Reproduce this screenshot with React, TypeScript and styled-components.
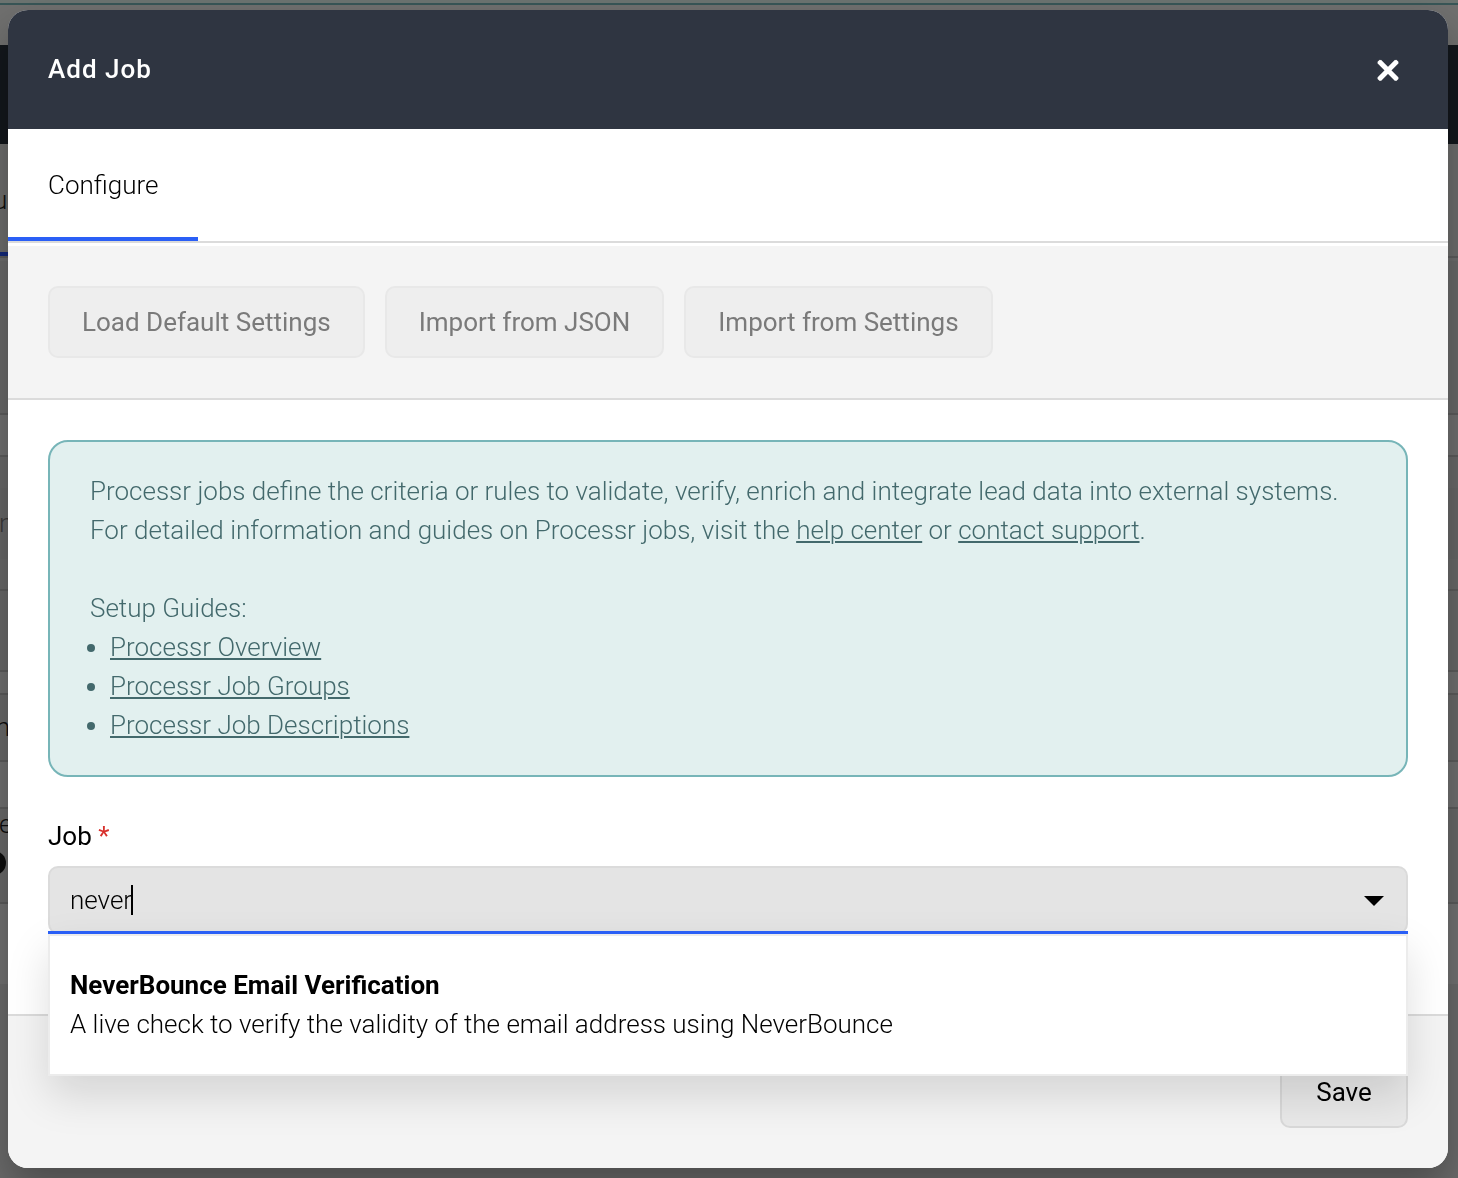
import React, { useState } from "react";
import styled, { createGlobalStyle } from "styled-components";

const GlobalStyle = createGlobalStyle`
  *, *::before, *::after { box-sizing: border-box; }
  body {
    margin: 0;
    background: #6a6a6a;
    color: #000;
    font: 300 26px/39px Roboto, "Liberation Sans", sans-serif;
    overflow: hidden;
  }
  button, input { font: inherit; color: inherit; }
`;

const Page = styled.div`
  display: flex;
  flex-direction: column;
`;

const Band = styled.div<{ $h: number; $bg?: string; $line?: string; $ink?: string }>`
  display: flex;
  align-items: center;
  height: ${(p) => p.$h}px;
  background: ${(p) => p.$bg ?? "#696969"};
  border-bottom: ${(p) => (p.$line ? `2px solid ${p.$line}` : "0")};
  color: ${(p) => p.$ink ?? "#0c0c0c"};
  overflow: hidden;
`;

const Clipped = styled.span<{ $cut: number }>`
  margin-left: -${(p) => p.$cut}px;
`;

const PageTab = styled.span`
  display: flex;
  align-items: center;
  align-self: stretch;
  width: 100px;
  padding-top: 4px;
  border-bottom: 4px solid #14297a;
`;

const Dot = styled.span`
  width: 24px;
  height: 24px;
  margin-left: -18px;
  border-radius: 50%;
  background: #0c0c0c;
`;

const Overlay = styled.div`
  position: fixed;
  inset: 0;
  padding: 10px 10px 10px 8px;
`;

const Modal = styled.section`
  border-radius: 20px;
  background: #fff;
  box-shadow: 0 20px 40px rgba(0, 0, 0, 0.3);
`;

const Header = styled.header`
  display: flex;
  align-items: center;
  justify-content: space-between;
  padding: 40px;
  border-radius: 20px 20px 0 0;
  background: #2f3541;
  color: #fff;
`;

const Title = styled.h2`
  margin: 0;
  font-size: 26px;
  font-weight: 500;
  letter-spacing: 1px;
`;

const Close = styled.button`
  display: flex;
  padding: 0;
  border: 0;
  background: none;
`;

const Tabs = styled.nav`
  display: flex;
  margin-bottom: 3px;
  border-bottom: 2px solid #dbdbdb;
`;

const Tab = styled.button`
  height: 112px;
  padding: 4px 40px 0;
  border: 0;
  border-bottom: 4px solid #2a5ff6;
  background: none;
`;

const Toolbar = styled.div`
  display: flex;
  gap: 20px;
  padding: 40px;
  border-bottom: 2px solid #dbdbdb;
  background: #f4f4f4;
`;

const Button = styled.button`
  min-width: 128px;
  height: 72px;
  padding: 0 32px;
  border: 2px solid #d9d9d9;
  border-radius: 10px;
  background: #e9e9e9;
  font-weight: 400;

  &:disabled {
    border-color: #e8e8e8;
    background: #eee;
    color: #7a7a7a;
  }
`;

const Body = styled.div`
  padding: 40px 40px 80px;
`;

const Notice = styled.div`
  padding: 30px 40px;
  border: 2px solid #77b5b8;
  border-radius: 20px;
  background: #e2f0ef;
  color: #43696c;

  p { margin: 0 0 39px; }
  p + p { margin: 0; }
  ul { margin: 0; padding-left: 20px; }
  a { color: inherit; text-underline-offset: 2px; text-decoration-thickness: 2px; }
`;

const Label = styled.label`
  display: block;
  margin: 40px 0 10px;
  font-weight: 400;

  span { color: #d8302c; }
`;

const Combo = styled.div`
  position: relative;
`;

const Field = styled.div`
  display: flex;
  align-items: center;
  height: 68px;
  padding: 0 20px;
  border: 2px solid #dbdbdb;
  border-radius: 10px;
  background: #e4e4e4;
`;

const FieldInput = styled.input`
  field-sizing: content;
  min-width: 0;
  padding: 0;
  border: 0;
  outline: 0;
  background: none;
  caret-color: transparent;
`;

const Caret = styled.span`
  width: 2px;
  height: 30px;
  margin-left: -1px;
  background: #000;
`;

const Toggle = styled.button`
  display: flex;
  margin-left: auto;
  padding: 2px 2px 0;
  border: 0;
  background: none;
`;

const Menu = styled.ul`
  position: absolute;
  top: 65px;
  left: 0;
  right: 0;
  margin: 0;
  padding: 0;
  border-top: 3px solid #2a5ff6;
  background: #fff;
  box-shadow: 0 20px 40px rgba(0, 0, 0, 0.13);
  list-style: none;
`;

const Option = styled.li`
  padding: 30px 20px;
  border: 2px solid #ececec;

  strong { display: block; font-weight: 700; }
`;

const Footer = styled.footer`
  display: flex;
  justify-content: flex-end;
  padding: 40px;
  border-top: 2px solid #dbdbdb;
  border-radius: 0 0 20px 20px;
  background: #f4f4f4;
`;

const guides = ["Processr Overview", "Processr Job Groups", "Processr Job Descriptions"];
const imports = ["Load Default Settings", "Import from JSON", "Import from Settings"];
const rule = "#5c5c5c";

function Backdrop() {
  return (
    <Page aria-hidden="true">
      <Band $h={5} $bg="#6c7471" $line="#385657" />
      <Band $h={40} $bg="#70706f" />
      <Band $h={99} $bg="#13171c" />
      <Band $h={114} $bg="#6d6d6c" $line={rule}>
        <PageTab><Clipped $cut={7}>u</Clipped></PageTab>
      </Band>
      <Band $h={3} $bg="#6d6d6d" />
      <Band $h={154} $bg="#696969" $line={rule} />
      <Band $h={42} $bg="#707070" $line={rule} />
      <Band $h={31} />
      <Band $h={71} $bg="#676767" $ink="#3a3a3a"><Clipped $cut={1}>n</Clipped></Band>
      <Band $h={32} $line={rule} />
      <Band $h={81} $line={rule} />
      <Band $h={23} $bg="#707070" $line={rule} />
      <Band $h={67} $line={rule}><Clipped $cut={13}>m</Clipped></Band>
      <Band $h={47} $bg="#707070" $line={rule} />
      <Band $h={31}><Clipped $cut={1}>e</Clipped></Band>
      <Band $h={46}><Dot /></Band>
      <Band $h={18} $line={rule} />
      <Band $h={80} $bg="#727272" />
      <Band $h={194} $bg="#6b6b6b" />
    </Page>
  );
}

export default function App() {
  const [query, setQuery] = useState("never");

  return (
    <>
      <GlobalStyle />
      <Backdrop />
      <Overlay>
        <Modal role="dialog" aria-labelledby="title">
          <Header>
            <Title id="title">Add Job</Title>
            <Close aria-label="Close">
              <svg width="40" height="24" viewBox="-8 0 40 24" stroke="#fff" strokeWidth="5" strokeLinejoin="round">
                <path d="M3.2 3.6 20.8 21.2M20.8 3.6 3.2 21.2" />
                <path strokeWidth="2" d="M2.5 4.3 3.9 2.9M20.1 2.9 21.5 4.3M2.5 20.5 3.9 21.9M20.1 21.9 21.5 20.5" strokeLinecap="round" />
              </svg>
            </Close>
          </Header>
          <Tabs>
            <Tab>Configure</Tab>
          </Tabs>
          <Toolbar>
            {imports.map((name) => (
              <Button key={name} disabled>{name}</Button>
            ))}
          </Toolbar>
          <Body>
            <Notice>
              <p>
                Processr jobs define the criteria or rules to validate, verify, enrich and integrate lead data into
                external systems. For detailed information and guides on Processr jobs, visit the{" "}
                <a href="#help">help center</a> or <a href="#support">contact support</a>.
              </p>
              <p>Setup Guides:</p>
              <ul>
                {guides.map((name) => (
                  <li key={name}><a href="#guide">{name}</a></li>
                ))}
              </ul>
            </Notice>
            <Label htmlFor="job">Job <span>*</span></Label>
            <Combo>
              <Field>
                <FieldInput
                  id="job"
                  role="combobox"
                  aria-expanded="true"
                  aria-controls="jobs"
                  autoComplete="off"
                  value={query}
                  onChange={(e) => setQuery(e.target.value)}
                />
                <Caret />
                <Toggle aria-label="Show jobs">
                  <svg width="20" height="10" viewBox="0 0 20 10"><path d="M0 0H20L10 10Z" /></svg>
                </Toggle>
              </Field>
              <Menu id="jobs" role="listbox">
                <Option role="option" aria-selected="false">
                  <strong>NeverBounce Email Verification</strong>
                  A live check to verify the validity of the email address using NeverBounce
                </Option>
              </Menu>
            </Combo>
          </Body>
          <Footer>
            <Button>Save</Button>
          </Footer>
        </Modal>
      </Overlay>
    </>
  );
}
